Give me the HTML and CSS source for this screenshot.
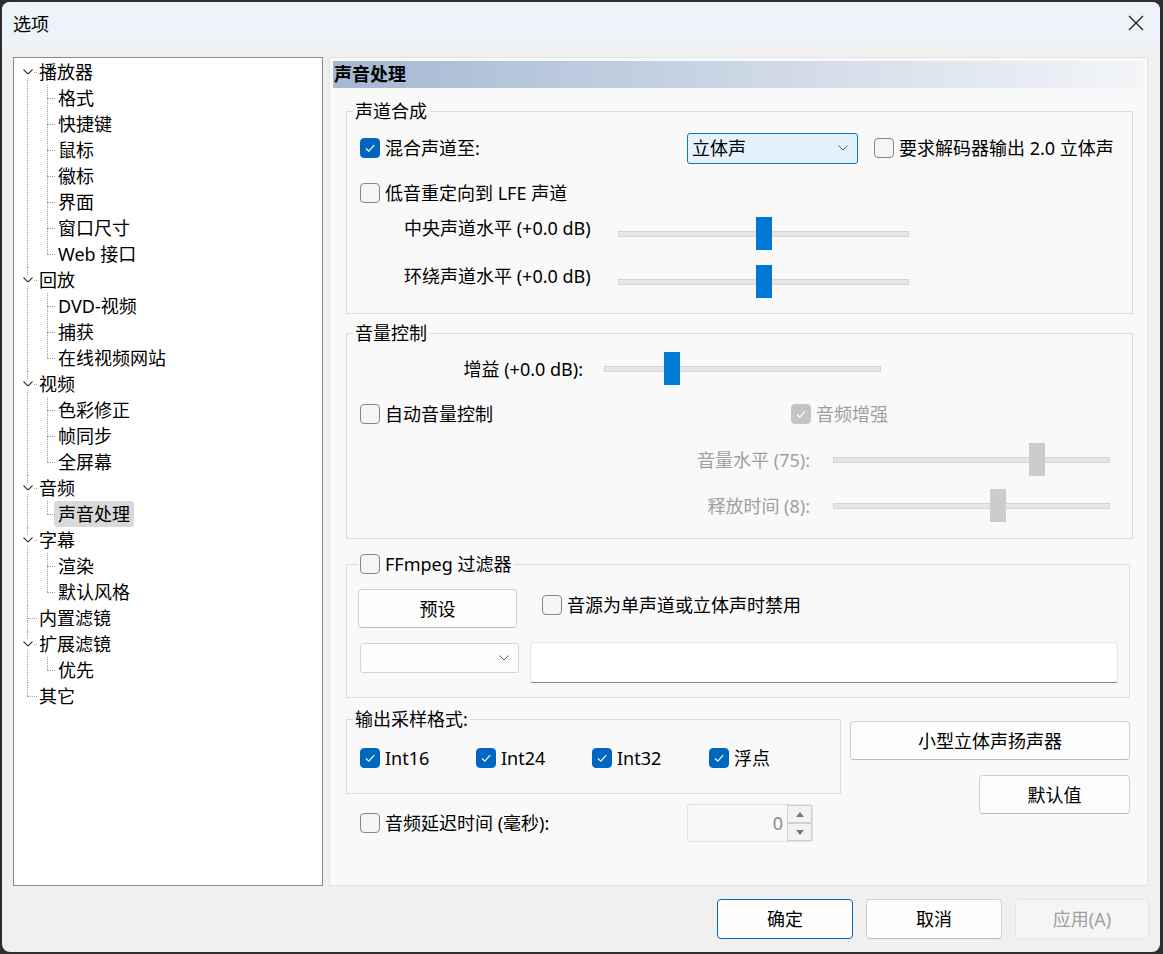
FILE: index.html
```html
<!DOCTYPE html>
<html lang="zh-CN">
<head>
<meta charset="utf-8">
<title>选项</title>
<link rel="stylesheet" href="styles.css">
</head>
<body>
<div class="window">
  <div class="titlebar">
    <span class="title">选项</span>
    <svg class="close" width="16" height="16" viewBox="0 0 16 16"><path d="M1 1L15 15M15 1L1 15" stroke="#1b1b1b" stroke-width="1.3" fill="none"/></svg>
  </div>

  <div class="main">
    <div class="tree-box">
      <ul class="tree">
        <li><div class="row"><span class="twisty"><svg width="10" height="6" viewBox="0 0 10 6"><path d="M0.5 0.5L5 5L9.5 0.5" fill="none" stroke="#3a3a3a" stroke-width="1.1"/></svg></span><span class="label">播放器</span></div>
          <ul>
            <li><div class="row"><span class="label">格式</span></div></li>
            <li><div class="row"><span class="label">快捷键</span></div></li>
            <li><div class="row"><span class="label">鼠标</span></div></li>
            <li><div class="row"><span class="label">徽标</span></div></li>
            <li><div class="row"><span class="label">界面</span></div></li>
            <li><div class="row"><span class="label">窗口尺寸</span></div></li>
            <li><div class="row"><span class="label">Web 接口</span></div></li>
          </ul>
        </li>
        <li><div class="row"><span class="twisty"><svg width="10" height="6" viewBox="0 0 10 6"><path d="M0.5 0.5L5 5L9.5 0.5" fill="none" stroke="#3a3a3a" stroke-width="1.1"/></svg></span><span class="label">回放</span></div>
          <ul>
            <li><div class="row"><span class="label">DVD-视频</span></div></li>
            <li><div class="row"><span class="label">捕获</span></div></li>
            <li><div class="row"><span class="label">在线视频网站</span></div></li>
          </ul>
        </li>
        <li><div class="row"><span class="twisty"><svg width="10" height="6" viewBox="0 0 10 6"><path d="M0.5 0.5L5 5L9.5 0.5" fill="none" stroke="#3a3a3a" stroke-width="1.1"/></svg></span><span class="label">视频</span></div>
          <ul>
            <li><div class="row"><span class="label">色彩修正</span></div></li>
            <li><div class="row"><span class="label">帧同步</span></div></li>
            <li><div class="row"><span class="label">全屏幕</span></div></li>
          </ul>
        </li>
        <li><div class="row"><span class="twisty"><svg width="10" height="6" viewBox="0 0 10 6"><path d="M0.5 0.5L5 5L9.5 0.5" fill="none" stroke="#3a3a3a" stroke-width="1.1"/></svg></span><span class="label">音频</span></div>
          <ul>
            <li><div class="row"><span class="label sel">声音处理</span></div></li>
          </ul>
        </li>
        <li><div class="row"><span class="twisty"><svg width="10" height="6" viewBox="0 0 10 6"><path d="M0.5 0.5L5 5L9.5 0.5" fill="none" stroke="#3a3a3a" stroke-width="1.1"/></svg></span><span class="label">字幕</span></div>
          <ul>
            <li><div class="row"><span class="label">渲染</span></div></li>
            <li><div class="row"><span class="label">默认风格</span></div></li>
          </ul>
        </li>
        <li><div class="row"><span class="label">内置滤镜</span></div></li>
        <li><div class="row"><span class="twisty"><svg width="10" height="6" viewBox="0 0 10 6"><path d="M0.5 0.5L5 5L9.5 0.5" fill="none" stroke="#3a3a3a" stroke-width="1.1"/></svg></span><span class="label">扩展滤镜</span></div>
          <ul>
            <li><div class="row"><span class="label">优先</span></div></li>
          </ul>
        </li>
        <li><div class="row"><span class="label">其它</span></div></li>
      </ul>
    </div>

    <div class="panel">
      <div class="header">声音处理</div>

      <div class="group g1">
        <div class="legend">声道合成</div>
        <div class="r1">
          <div class="ck w327"><span class="cb on"><svg width="18" height="18" viewBox="0 0 18 18"><path d="M5 9.5L7.8 12.2L13.2 6.2" fill="none" stroke="#fff" stroke-width="1.1"/></svg></span>混合声道至:</div>
          <div class="select sel-stereo"><span>立体声</span><svg width="10" height="6" viewBox="0 0 10 6"><path d="M0.5 0.5L5 5L9.5 0.5" fill="none" stroke="#606060" stroke-width="1"/></svg></div>
          <div class="ck ml16"><span class="cb"></span>要求解码器输出 2.0 立体声</div>
        </div>
        <div class="r2">
          <div class="ck"><span class="cb"></span>低音重定向到 LFE 声道</div>
        </div>
        <div class="rs first-s">
          <div class="slabel w214">中央声道水平 (+0.0 dB)</div>
          <div class="slider w291"><div class="track"></div><div class="thumb" style="left:138px"></div></div>
        </div>
        <div class="rs second-s">
          <div class="slabel w214">环绕声道水平 (+0.0 dB)</div>
          <div class="slider w291"><div class="track"></div><div class="thumb" style="left:138px"></div></div>
        </div>
      </div>

      <div class="group g2">
        <div class="legend">音量控制</div>
        <div class="rg gain">
          <div class="slabel right w223">增益 (+0.0 dB):</div>
          <div class="slider w277 ml21"><div class="track"></div><div class="thumb" style="left:60px"></div></div>
        </div>
        <div class="r2 auto">
          <div class="ck w431"><span class="cb"></span>自动音量控制</div>
          <div class="ck dis"><span class="cb on dis"><svg width="18" height="18" viewBox="0 0 18 18"><path d="M5 9.5L7.8 12.2L13.2 6.2" fill="none" stroke="#fff" stroke-width="1.1"/></svg></span>音频增强</div>
        </div>
        <div class="rg level">
          <div class="slabel right w450 dis">音量水平 (75):</div>
          <div class="slider w277 ml23"><div class="track"></div><div class="thumb gray" style="left:196px"></div></div>
        </div>
        <div class="rg release">
          <div class="slabel right w450 dis">释放时间 (8):</div>
          <div class="slider w277 ml23"><div class="track"></div><div class="thumb gray" style="left:157px"></div></div>
        </div>
      </div>

      <div class="group g3">
        <div class="legend lg-ck"><span class="cb"></span>FFmpeg 过滤器</div>
        <div class="ra">
          <div class="btn preset">预设</div>
          <div class="ck mono"><span class="cb"></span>音源为单声道或立体声时禁用</div>
        </div>
        <div class="rb">
          <div class="select combo"><span></span><svg width="10" height="6" viewBox="0 0 10 6"><path d="M0.5 0.5L5 5L9.5 0.5" fill="none" stroke="#606060" stroke-width="1"/></svg></div>
          <div class="textbox"></div>
        </div>
      </div>

      <div class="lower">
        <div class="lower-left">
          <div class="group g4">
            <div class="legend">输出采样格式:</div>
            <div class="fmt">
              <div class="ck"><span class="cb on"><svg width="18" height="18" viewBox="0 0 18 18"><path d="M5 9.5L7.8 12.2L13.2 6.2" fill="none" stroke="#fff" stroke-width="1.1"/></svg></span>Int16</div>
              <div class="ck"><span class="cb on"><svg width="18" height="18" viewBox="0 0 18 18"><path d="M5 9.5L7.8 12.2L13.2 6.2" fill="none" stroke="#fff" stroke-width="1.1"/></svg></span>Int24</div>
              <div class="ck"><span class="cb on"><svg width="18" height="18" viewBox="0 0 18 18"><path d="M5 9.5L7.8 12.2L13.2 6.2" fill="none" stroke="#fff" stroke-width="1.1"/></svg></span>Int32</div>
              <div class="ck"><span class="cb on"><svg width="18" height="18" viewBox="0 0 18 18"><path d="M5 9.5L7.8 12.2L13.2 6.2" fill="none" stroke="#fff" stroke-width="1.1"/></svg></span>浮点</div>
            </div>
          </div>
          <div class="delay">
            <div class="ck w327"><span class="cb"></span>音频延迟时间 (毫秒):</div>
            <div class="spin">
              <div class="spin-val">0</div>
              <div class="spin-btns">
                <div class="spin-btn"><svg width="8" height="5" viewBox="0 0 8 5"><path d="M0 5L4 0L8 5Z" fill="#7a7a7a"/></svg></div>
                <div class="spin-btn"><svg width="8" height="5" viewBox="0 0 8 5"><path d="M0 0L4 5L8 0Z" fill="#7a7a7a"/></svg></div>
              </div>
            </div>
          </div>
        </div>
        <div class="lower-right">
          <div class="btn speakers">小型立体声扬声器</div>
          <div class="btn defaults">默认值</div>
        </div>
      </div>
    </div>
  </div>

  <div class="footer">
    <div class="btn fbtn primary">确定</div>
    <div class="btn fbtn">取消</div>
    <div class="btn fbtn apply disabled">应用(A)</div>
  </div>
</div>
</body>
</html>
```

FILE: styles.css
```css
* { box-sizing: border-box; }
html, body { margin: 0; padding: 0; }
body {
  width: 1163px;
  height: 954px;
  overflow: hidden;
  background: #2e2e2e;
  font-family: "Noto Sans", "Noto Sans CJK SC", sans-serif;
  font-size: 18px;
  color: #000;
}
.window {
  margin: 2px 3px 2px 2px;
  width: 1158px;
  height: 950px;
  background: #f0f0f0;
  border-radius: 8px;
  overflow: hidden;
  display: flex;
  flex-direction: column;
}
.titlebar {
  height: 43px;
  flex: none;
  background: #eef2f9;
  display: flex;
  align-items: center;
  justify-content: space-between;
  padding: 0 16px 0 11px;
}
.title { line-height: 22px; }
.close { margin-top: -2px; }

.main {
  display: flex;
  gap: 6px;
  padding: 12px 12px 0 11px;
  height: 841px;
  flex: none;
}
.tree-box {
  width: 310px;
  height: 829px;
  background: #fff;
  border: 1px solid #878b93;
  overflow: hidden;
}

/* tree */
.tree { list-style: none; margin: 0; padding: 1px 0 0 25px; }
.tree ul { list-style: none; margin: 0; padding: 0 0 0 19px; position: relative; }
.tree li { position: relative; }
.row { height: 26px; line-height: 26px; position: relative; white-space: nowrap; }
.label { display: inline-block; height: 26px; }
.label.sel { background: #d9d9d9; border-radius: 3px; padding: 0 4px; margin-left: -4px; }

.tree > li::before {
  content: ""; position: absolute; left: -12px; top: 0; bottom: 0;
  border-left: 1px dotted #a0a0a0;
}
.tree > li:first-child::before { top: 13px; }
.tree > li:last-child::before { bottom: auto; height: 13px; }
.tree > li > .row::before {
  content: ""; position: absolute; left: -12px; top: 13px; width: 10px;
  border-top: 1px dotted #a0a0a0;
}
.tree ul::before {
  content: ""; position: absolute; left: 8px; top: 0; bottom: 13px;
  border-left: 1px dotted #a0a0a0;
}
.tree ul .row::before {
  content: ""; position: absolute; left: -11px; top: 13px; width: 8px;
  border-top: 1px dotted #a0a0a0;
}
.twisty {
  position: absolute; left: -17px; top: 8px; width: 11px; height: 10px;
  background: #fff; display: flex; align-items: center; justify-content: center;
  z-index: 1;
}

/* right panel */
.panel {
  width: 819px;
  height: 829px;
  background: #f9f9f9;
  border: 1px solid #e3e3e3;
  padding: 3px 14px 0 16px;
}
.header {
  height: 27px;
  margin: 0 -11px 0 -13px;
  padding-left: 1px;
  background: linear-gradient(to right, #a4b8d2, #f3f5f8);
  font-weight: bold;
  line-height: 27px;
}
.group { border: 1px solid #dcdcdc; }
.legend {
  display: flex; align-items: center; gap: 5px;
  width: fit-content; height: 22px; line-height: 22px;
  margin: -12px 0 0 6px; padding: 0 2px;
  background: #f9f9f9; white-space: nowrap;
}
.legend.lg-ck { margin-left: 11px; }

.ck { display: flex; align-items: center; gap: 5px; line-height: 22px; white-space: nowrap; flex: none; }
.ck.dis { color: #9e9e9e; }
.cb {
  width: 20px; height: 20px; flex: none;
  border: 1px solid #878787; border-radius: 4px; background: #f5f5f5;
  display: flex; align-items: center; justify-content: center;
}
.cb.on { background: #0067c0; border-color: #0067c0; }
.cb.on.dis { background: #c4c4c4; border-color: #c4c4c4; }

.w327 { width: 327px; }
.w431 { width: 431px; }
.w214 { width: 214px; }
.w223 { width: 223px; }
.w450 { width: 450px; }
.w291 { width: 291px; }
.w277 { width: 277px; }
.ml16 { margin-left: 16px; }
.ml21 { margin-left: 21px; }
.ml23 { margin-left: 23px; }

.select {
  display: flex; align-items: center; justify-content: space-between;
  padding: 0 9px 0 4px; border-radius: 3px; flex: none;
}
.sel-stereo {
  width: 171px; height: 31px;
  background: #e5f1fb; border: 1px solid #0078d4;
  line-height: 22px;
}
.combo {
  width: 159px; height: 30px; margin-top: 1px;
  background: #fdfdfd; border: 1px solid #d5d5d5;
}

.slabel { line-height: 22px; white-space: nowrap; flex: none; }
.slabel.right { text-align: right; }
.slabel.dis { color: #a0a0a0; }
.slider { position: relative; height: 33px; display: flex; align-items: center; flex: none; }
.track { flex: 1; height: 6px; background: #e6e6e6; border: 1px solid #d4d4d4; }
.thumb { position: absolute; top: 0; width: 16px; height: 33px; background: #0078d4; }
.thumb.gray { background: #cccccc; }

/* group 1 */
.g1 { margin-top: 23px; padding-bottom: 15px; }
.r1 { display: flex; align-items: center; height: 32px; margin: 10px 0 0 13px; }
.r2 { display: flex; align-items: center; height: 26px; margin: 16px 0 0 13px; }
.rs { display: flex; align-items: flex-start; margin-left: 57px; }
.first-s { margin-top: 11px; }
.second-s { margin-top: 15px; }

/* group 2 */
.g2 { margin-top: 19px; padding-bottom: 16px; }
.rg { display: flex; align-items: center; height: 33px; margin-left: 13px; }
.gain { margin-top: 8px; }
.level { margin-top: 16px; }
.release { margin-top: 13px; }

/* group 3 */
.g3 { margin: 25px 3px 0 0; padding-bottom: 14px; }
.ra { display: flex; align-items: flex-start; margin: 14px 0 0 11px; }
.preset { width: 159px; height: 39px; }
.mono { margin: 5px 0 0 25px; }
.rb { display: flex; align-items: flex-start; margin: 14px 0 0 13px; }
.textbox {
  width: 588px; height: 41px; margin-left: 11px;
  background: #fff; border: 1px solid #e5e5e5; border-bottom-color: #8a8a8a;
  border-radius: 3px;
}

/* buttons */
.btn {
  display: flex; align-items: center; justify-content: center;
  background: #fdfdfd; border: 1px solid #d0d0d0; border-bottom-color: #bcbcbc;
  border-radius: 4px; white-space: nowrap; line-height: 22px;
}

/* lower section */
.lower { display: flex; gap: 9px; margin-top: 21px; }
.lower-left { width: 495px; flex: none; }
.g4 { padding-bottom: 26px; }
.fmt {
  display: grid; grid-template-columns: 116px 116px 117px auto;
  height: 20px; margin: 17px 0 0 13px; align-items: center;
}
.delay { display: flex; align-items: center; height: 38px; margin: 10px 0 0 14px; }
.spin {
  display: flex; width: 126px; height: 38px;
  border: 1px solid #e3e3e3; background: #f9f9f9; border-radius: 3px;
}
.spin-val { flex: 1; text-align: right; padding-right: 4px; color: #8a8a8a; line-height: 36px; }
.spin-btns { width: 25px; display: flex; flex-direction: column; }
.spin-btn {
  flex: 1; border: 1px solid #d0d0d0; background: #f3f3f3;
  display: flex; align-items: center; justify-content: center;
}
.lower-right { width: 280px; display: flex; flex-direction: column; align-items: flex-end; }
.speakers { width: 280px; height: 39px; margin-top: 2px; }
.defaults { width: 151px; height: 39px; margin-top: 15px; }

/* footer */
.footer { display: flex; justify-content: flex-end; gap: 13px; padding: 13px 11px 0 0; }
.fbtn { width: 136px; height: 40px; }
.fbtn.primary { border-color: #0067c0; }
.fbtn.apply { width: 134px; }
.fbtn.disabled { background: #f5f5f5; border-color: #e5e5e5; color: #a0a0a0; }
```
